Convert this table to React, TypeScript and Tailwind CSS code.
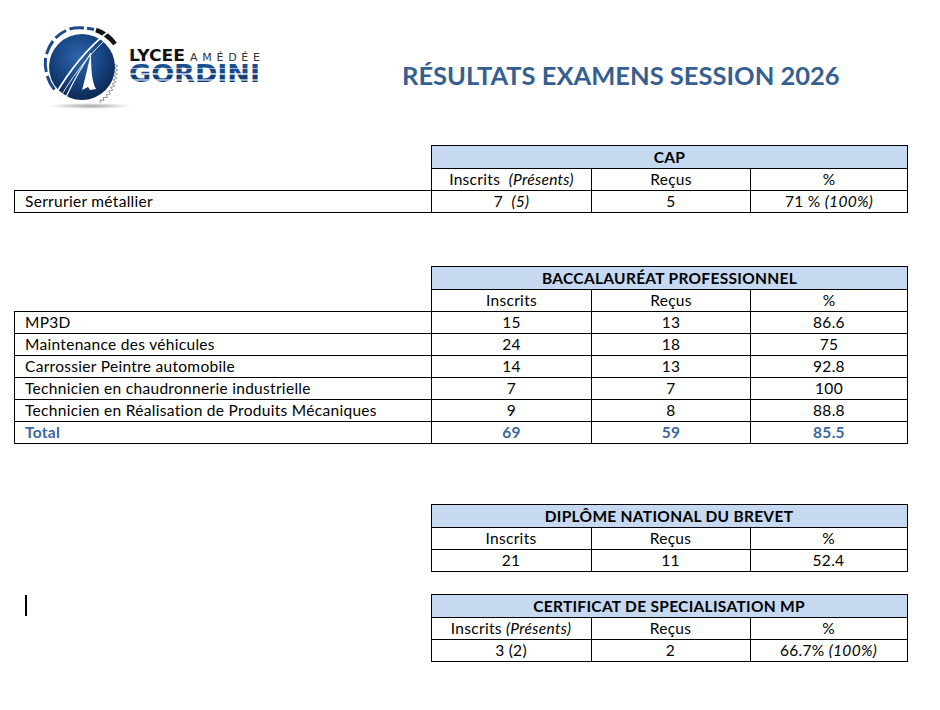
import React from "react";

type Row = { label?: React.ReactNode; cells: React.ReactNode[]; total?: boolean };

const font = { fontFamily: "Lato, 'Open Sans', sans-serif" };

function Logo() {
  return (
    <svg width="240" height="95" viewBox="0 0 240 95" className="block">
      <defs>
        <radialGradient id="disc" cx="0.45" cy="0.35" r="0.75">
          <stop offset="0" stopColor="#2d66ad" />
          <stop offset="0.55" stopColor="#15407c" />
          <stop offset="1" stopColor="#0a1e3f" />
        </radialGradient>
        <linearGradient id="stripes" x1="0" y1="0" x2="0" y2="1">
          <stop offset="0" stopColor="#1d4f8f" />
          <stop offset="0.3" stopColor="#1d4f8f" />
          <stop offset="0.3" stopColor="#9cb7d8" />
          <stop offset="0.36" stopColor="#9cb7d8" />
          <stop offset="0.36" stopColor="#1a4a88" />
          <stop offset="0.5" stopColor="#1a4a88" />
          <stop offset="0.5" stopColor="#a9c1de" />
          <stop offset="0.56" stopColor="#a9c1de" />
          <stop offset="0.56" stopColor="#163f78" />
          <stop offset="0.69" stopColor="#163f78" />
          <stop offset="0.69" stopColor="#8fadd2" />
          <stop offset="0.75" stopColor="#8fadd2" />
          <stop offset="0.75" stopColor="#123566" />
          <stop offset="0.87" stopColor="#123566" />
          <stop offset="0.87" stopColor="#7f9fc8" />
          <stop offset="0.92" stopColor="#7f9fc8" />
          <stop offset="0.92" stopColor="#0f2d58" />
          <stop offset="1" stopColor="#0f2d58" />
        </linearGradient>
        <radialGradient id="shadow" cx="0.5" cy="0.5" r="0.5">
          <stop offset="0" stopColor="#000" stopOpacity="0.35" />
          <stop offset="1" stopColor="#000" stopOpacity="0" />
        </radialGradient>
      </defs>
      {/* shadow under disc */}
      <ellipse cx="60" cy="86" rx="42" ry="3" fill="url(#shadow)" />
      {/* outer ring segments */}
      <g fill="none" stroke="#1c4a8a" strokeWidth="3">
        <path d="M 24.4 69.5 A 39 39 0 0 1 17.2 56" />
        <path d="M 16.3 52 A 39 39 0 0 1 15.5 38" />
        <path d="M 16.5 34 A 39 39 0 0 1 23 21" />
        <path d="M 25.5 18 A 39 39 0 0 1 36 10.5" />
        <path d="M 39.5 9 A 39 39 0 0 1 54 8" />
        <path d="M 57 8.2 A 39 39 0 0 1 64 9.5" />
      </g>
      <path d="M 66 10 A 39 39 0 0 1 85 24" fill="none" stroke="#151515" strokeWidth="4.5" />
      {/* zigzag spring */}
      <polyline
        points="84,44 88,46 84,48 88,50 84,52 87.5,54 83.5,56 87,58 83,60 86,62 82,64 85,66 80.5,67.5 83,70 78.5,71 80.5,74 76,74.5 77.5,77.5 73,77.5 74,80.5 70,80 70.5,83"
        fill="none"
        stroke="#8a8a8a"
        strokeWidth="0.9"
      />
      {/* disc */}
      <circle cx="52" cy="47" r="33" fill="url(#disc)" />
      {/* swoosh */}
      <path d="M 24 77 C 36 56, 55 30, 79 11" fill="none" stroke="#ffffff" strokeWidth="1.6" />
      <path d="M 30 78 C 40 60, 56 38, 73 22" fill="none" stroke="#dfe8f3" strokeWidth="1" />
      <path
        d="M 61 33 C 58 45, 56 56, 52 70 L 58 67 L 60 70 L 66 69 C 62 62, 61 50, 61 33 Z"
        fill="#ffffff"
      />
      <path d="M 36 77 C 44 60, 52 46, 61 33" fill="none" stroke="#ffffff" strokeWidth="1.2" />
      {/* wordmark */}
      <text
        x="99"
        y="41"
        fontFamily="'DejaVu Sans', sans-serif"
        fontWeight="900"
        fontSize="16.5"
        fill="#111"
        textLength="56"
        lengthAdjust="spacingAndGlyphs"
      >
        LYCEE
      </text>
      <text
        x="160"
        y="41"
        fontFamily="'DejaVu Sans', sans-serif"
        fontSize="11"
        fill="#333"
        textLength="70"
        lengthAdjust="spacing"
      >
        AMÉDÉE
      </text>
      <text
        x="99"
        y="62"
        fontFamily="'DejaVu Sans', sans-serif"
        fontWeight="700"
        fontSize="25"
        fill="url(#stripes)"
        textLength="131"
        lengthAdjust="spacingAndGlyphs"
      >
        GORDINI
      </text>
    </svg>
  );
}

function ResultTable({
  title,
  heads,
  rows,
  className,
}: {
  title: string;
  heads: React.ReactNode[];
  rows: Row[];
  className?: string;
}) {
  return (
    <table
      className={`w-[893px] table-fixed border-collapse text-[15.5px] tracking-[0.3px] text-black ${className ?? ""}`}
    >
      <colgroup>
        <col className="w-[417px]" />
        <col className="w-[160px]" />
        <col className="w-[159px]" />
        <col className="w-[157px]" />
      </colgroup>
      <tbody>
        <tr className="h-[23px]">
          <td className="p-0" />
          <td
            colSpan={3}
            className="border border-black bg-[#c6d9f1] p-0 text-center font-bold leading-[21px]"
          >
            {title}
          </td>
        </tr>
        <tr className="h-[22px]">
          <td className="p-0" />
          {heads.map((h, i) => (
            <td key={i} className="border border-black p-0 text-center leading-[21px]">
              {h}
            </td>
          ))}
        </tr>
        {rows.map((r, i) => (
          <tr key={i} className={`h-[22px] ${r.total ? "font-bold text-[#3a67a0]" : ""}`}>
            {r.label !== undefined ? (
              <td className="border border-black py-0 pl-[10px] leading-[21px]">{r.label}</td>
            ) : (
              <td className="p-0" />
            )}
            {r.cells.map((c, j) => (
              <td key={j} className="border border-black p-0 text-center leading-[21px]">
                {c}
              </td>
            ))}
          </tr>
        ))}
      </tbody>
    </table>
  );
}

export default function App() {
  return (
    <div className="min-h-[710px] w-[940px] bg-white" style={font}>
      <header className="flex items-start">
        <div className="ml-[30px] mt-[20px]">
          <Logo />
        </div>
        <h1 className="ml-[132px] mt-[58px] text-[25.5px] font-bold leading-[34px] text-[#365f91]">
          RÉSULTATS EXAMENS SESSION 2026
        </h1>
      </header>

      <main className="ml-[14px] flex flex-col">
        <ResultTable
          className="mt-[30px]"
          title="CAP"
          heads={[
            <>
              Inscrits&nbsp; <i>(Présents)</i>
            </>,
            "Reçus",
            "%",
          ]}
          rows={[
            {
              label: "Serrurier métallier",
              cells: [
                <>
                  7&nbsp; <i>(5)</i>
                </>,
                "5",
                <>
                  71 % <i>(100%)</i>
                </>,
              ],
            },
          ]}
        />

        <ResultTable
          className="mt-[53px]"
          title="BACCALAURÉAT PROFESSIONNEL"
          heads={["Inscrits", "Reçus", "%"]}
          rows={[
            { label: "MP3D", cells: ["15", "13", "86.6"] },
            { label: "Maintenance des véhicules", cells: ["24", "18", "75"] },
            { label: "Carrossier Peintre automobile", cells: ["14", "13", "92.8"] },
            { label: "Technicien en chaudronnerie industrielle", cells: ["7", "7", "100"] },
            { label: "Technicien en Réalisation de Produits Mécaniques", cells: ["9", "8", "88.8"] },
            { label: "Total", cells: ["69", "59", "85.5"], total: true },
          ]}
        />

        <ResultTable
          className="mt-[60px]"
          title="DIPLÔME NATIONAL DU BREVET"
          heads={["Inscrits", "Reçus", "%"]}
          rows={[{ cells: ["21", "11", "52.4"] }]}
        />

        <div className="relative mt-[22px]">
          {/* text caret */}
          <span className="absolute left-[11px] top-[1px] h-[21px] w-[2px] bg-black" />
          <ResultTable
            title="CERTIFICAT DE SPECIALISATION MP"
            heads={[
              <>
                Inscrits <i>(Présents)</i>
              </>,
              "Reçus",
              "%",
            ]}
            rows={[
              {
                cells: [
                  "3 (2)",
                  "2",
                  <>
                    66.7% <i>(100%)</i>
                  </>,
                ],
              },
            ]}
          />
        </div>
      </main>
    </div>
  );
}
